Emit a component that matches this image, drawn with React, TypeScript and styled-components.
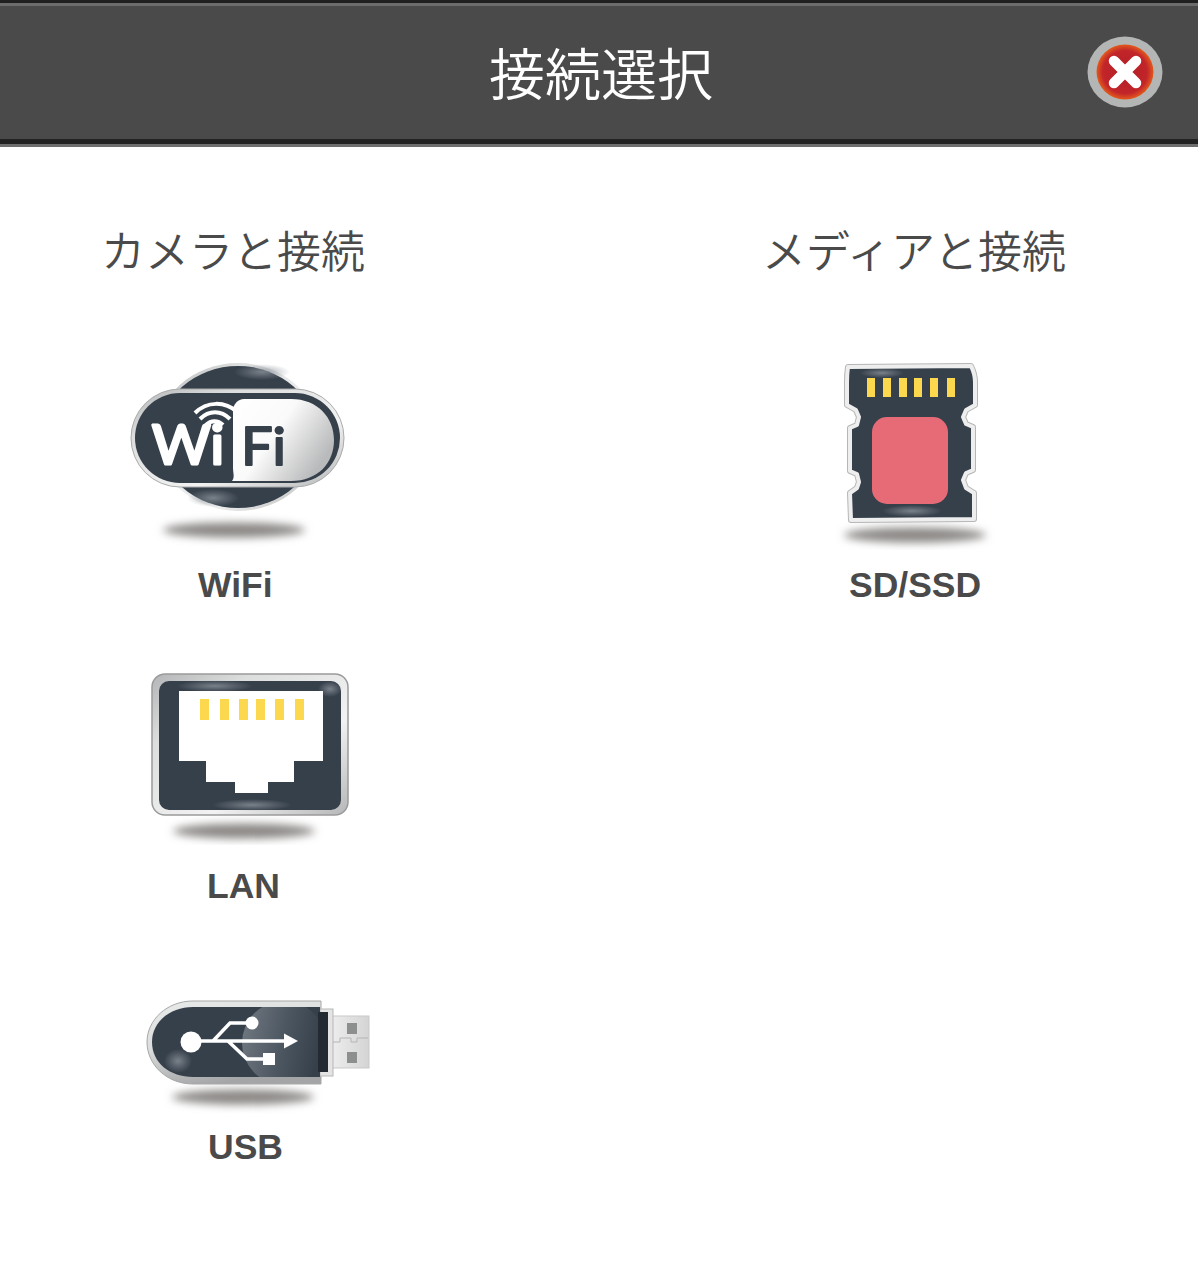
import React from 'react';
import styled, { createGlobalStyle } from 'styled-components';

const GlobalStyle = createGlobalStyle`
    html, body {
        margin: 0;
        padding: 0;
        background: #fff;
    }
`;

const Page = styled.div`
    width: 1200px;
    height: 1262px;
    overflow: hidden;
    font-family: 'Noto Sans CJK JP', 'Liberation Sans', sans-serif;
`;

const Header = styled.header`
    box-sizing: border-box;
    width: 1198px;
    height: 147px;
    display: grid;
    grid-template-columns: 1fr auto 1fr;
    align-items: center;
    background: #4a4a4a;
    border-top: 3px solid #1f1f1f;
    border-bottom: 3px solid #6e6e6e;
    box-shadow: inset 0 3px 0 #6c6c6c, inset 0 -5px 0 #222;
`;

const Title = styled.h1`
    grid-column: 2;
    margin: 0;
    color: #fff;
    font-size: 56px;
    font-weight: 350;
    line-height: 1;
    transform: translate(2px, -3px);
`;

const CloseButton = styled.button`
    grid-column: 3;
    justify-self: end;
    width: 76px;
    height: 72px;
    margin: -4px 35px 0 0;
    padding: 0;
    border: 0;
    background: none;
`;

const Columns = styled.main`
    display: grid;
    grid-template-columns: 598px 1fr;
`;

const Column = styled.section`
    display: flex;
    flex-direction: column;
`;

const Heading = styled.h2<{ $indent: number }>`
    margin: 77px 0 0 ${p => p.$indent}px;
    height: 50px;
    color: #4a4a4a;
    font-size: 44px;
    font-weight: 350;
    line-height: 50px;
    white-space: nowrap;
`;

const Item = styled.div<{ $top: number; $left: number }>`
    display: flex;
    flex-direction: column;
    width: 400px;
    margin-top: ${p => p.$top}px;
    padding-left: ${p => p.$left}px;
`;

const Label = styled.span<{ $gap: number; $left: number }>`
    margin: ${p => p.$gap}px 0 0 ${p => p.$left}px;
    color: #4a4a4a;
    font-family: 'Liberation Sans', Arial, sans-serif;
    font-size: 35.5px;
    font-weight: 700;
    line-height: 40px;
`;

const Icon = styled.svg`
    display: block;
`;

const CloseIcon = () => (
    <svg width="76" height="72" viewBox="0 0 76 72">
        <defs>
            <radialGradient id="closeFill" cx="50%" cy="50%" r="50%">
                <stop offset="0" stopColor="#b01f24" />
                <stop offset="0.78" stopColor="#c2252a" />
                <stop offset="1" stopColor="#e2591c" />
            </radialGradient>
        </defs>
        <ellipse cx="38" cy="36" rx="37.5" ry="35.5" fill="#b4b6b5" />
        <ellipse cx="38" cy="36" rx="28.5" ry="27.5" fill="url(#closeFill)" />
        <path d="M27 25 L49 47 M49 25 L27 47" stroke="#fff" strokeWidth="10.5" strokeLinecap="round" />
    </svg>
);

const Shadow = ({ id, cx, cy, rx }: { id: string; cx: number; cy: number; rx: number }) => (
    <>
        <filter id={id} x="-20%" y="-150%" width="140%" height="400%">
            <feGaussianBlur stdDeviation="4" />
        </filter>
        <ellipse cx={cx} cy={cy} rx={rx} ry="7.5" fill="#8a8785" filter={`url(#${id})`} />
    </>
);

const Defs = ({ prefix }: { prefix: string }) => (
    <defs>
        <linearGradient id={`${prefix}Rim`} x1="0" y1="0" x2="1" y2="1">
            <stop offset="0" stopColor="#b3b5b6" />
            <stop offset="0.25" stopColor="#dcdddd" />
            <stop offset="0.65" stopColor="#f2f2f2" />
            <stop offset="1" stopColor="#b5b6b7" />
        </linearGradient>
        <radialGradient id={`${prefix}Glow`}>
            <stop offset="0" stopColor="#8a9199" stopOpacity="0.8" />
            <stop offset="1" stopColor="#8a9199" stopOpacity="0" />
        </radialGradient>
        <linearGradient id={`${prefix}Shine`} x1="0" y1="0" x2="1" y2="0.55">
            <stop offset="0" stopColor="#ffffff" />
            <stop offset="0.5" stopColor="#fafafa" />
            <stop offset="1" stopColor="#b9babb" />
        </linearGradient>
    </defs>
);

const WifiIcon = () => (
    <Icon width="220" height="190" viewBox="130 360 220 190">
        <Defs prefix="wifi" />
        <Shadow id="wifiShadow" cx={234} cy={530} rx={71} />
        <ellipse cx="238" cy="437" rx="82" ry="74" fill="url(#wifiRim)" />
        <ellipse cx="238" cy="437" rx="79" ry="71" fill="#36404b" />
        <ellipse cx="262" cy="372" rx="28" ry="8" fill="url(#wifiGlow)" />
        <ellipse cx="213" cy="498" rx="26" ry="9" fill="url(#wifiGlow)" />
        <rect x="131" y="389" width="213" height="98" rx="49" stroke="#a9abac" strokeWidth="1" fill="url(#wifiRim)" />
        <rect x="135" y="393" width="205" height="90" rx="45" fill="#36404b" />
        <path
            d="M244 399 H291 C318 399 334 418 334 440 C334 463 318 481 291 481 H232 C235 477 233 473 233 468 V411 C233 404 238 399 244 399 Z"
            fill="url(#wifiShine)"
        />
        <path d="M195 413 C207 401 225 401 237 412" fill="none" stroke="#fff" strokeWidth="4" />
        <path d="M200 419 C209 410 221 410 230 419" fill="none" stroke="#fff" strokeWidth="4" />
        <path d="M206 425 C211 420 218 420 223 425" fill="none" stroke="#fff" strokeWidth="4" />
        <text
            x="152"
            y="464"
            fill="#fff"
            stroke="#fff"
            strokeWidth="3"
            strokeLinejoin="round"
            fontFamily="Lato, sans-serif"
            fontWeight="400"
            fontSize="54"
            textLength="72"
            lengthAdjust="spacingAndGlyphs"
        >
            Wi
        </text>
        <text
            x="241"
            y="465"
            fill="#36404b"
            stroke="#36404b"
            strokeWidth="2"
            strokeLinejoin="round"
            fontFamily="Lato, sans-serif"
            fontWeight="400"
            fontSize="52"
            textLength="45"
            lengthAdjust="spacingAndGlyphs"
        >
            Fi
        </text>
    </Icon>
);

const LanIcon = () => (
    <Icon width="220" height="180" viewBox="140 665 220 180">
        <Defs prefix="lan" />
        <Shadow id="lanShadow" cx={244} cy={831} rx={71} />
        <rect x="152" y="674" width="196" height="141" rx="13" fill="url(#lanRim)" stroke="#9a9b9c" strokeWidth="1.5" />
        <rect x="159" y="681" width="182" height="129" rx="10" fill="#36404b" />
        <ellipse cx="215" cy="686" rx="38" ry="6" fill="url(#lanGlow)" />
        <ellipse cx="330" cy="689" rx="12" ry="8" fill="url(#lanGlow)" />
        <ellipse cx="252" cy="805" rx="40" ry="6" fill="url(#lanGlow)" />
        <path d="M179 691 H323 V761 H294 V782 H268 V793 H235 V782 H206 V761 H179 Z" fill="#fff" />
        {[200, 220, 239, 256, 275, 295].map(x => (
            <rect key={x} x={x} y="699" width="9" height="21" fill="#fbd84e" />
        ))}
    </Icon>
);

const UsbIcon = () => (
    <Icon width="240" height="120" viewBox="140 995 240 120">
        <defs>
            <linearGradient id="usbRim" x1="0" y1="0" x2="0.4" y2="1">
                <stop offset="0" stopColor="#e9eaea" />
                <stop offset="0.5" stopColor="#dcdddd" />
                <stop offset="1" stopColor="#a4a5a6" />
            </linearGradient>
            <linearGradient id="usbLens" x1="0" y1="0" x2="1" y2="0.2">
                <stop offset="0" stopColor="#737b84" />
                <stop offset="0.55" stopColor="#4d5761" />
                <stop offset="1" stopColor="#36404b" />
            </linearGradient>
            <linearGradient id="usbPlug" x1="0" y1="0" x2="1" y2="0">
                <stop offset="0" stopColor="#efefef" />
                <stop offset="1" stopColor="#d4d4d4" />
            </linearGradient>
            <radialGradient id="usbGlow">
                <stop offset="0" stopColor="#8a9199" stopOpacity="0.8" />
                <stop offset="1" stopColor="#8a9199" stopOpacity="0" />
            </radialGradient>
            <clipPath id="usbClip">
                <path d="M193 1008 H320 V1078 H193 C170 1078 152 1064 152 1043 C152 1023 170 1008 193 1008 Z" />
            </clipPath>
        </defs>
        <Shadow id="usbShadow" cx={243} cy={1098} rx={71} />
        <rect x="329" y="1017" width="40" height="52" fill="url(#usbPlug)" stroke="#c9c9c9" strokeWidth="1" />
        <path d="M331 1043 H340 V1039 H351 V1043 H357 V1039 H368" fill="none" stroke="#b5b5b5" strokeWidth="1" />
        <rect x="347" y="1024" width="10" height="11" fill="#8c8f8d" />
        <rect x="347" y="1053" width="10" height="11" fill="#8c8f8d" />
        <path
            d="M193 1002 H321 V1085 H193 C167 1085 147 1066 147 1043 C147 1021 167 1002 193 1002 Z"
            fill="url(#usbRim)"
            stroke="#a6a7a8"
            strokeWidth="1"
        />
        <rect x="320" y="1010" width="13" height="67" fill="#e4e4e4" stroke="#b7b7b7" strokeWidth="1" />
        <path d="M193 1008 H320 V1078 H193 C170 1078 152 1064 152 1043 C152 1023 170 1008 193 1008 Z" fill="#36404b" />
        <g clipPath="url(#usbClip)">
            <circle cx="284" cy="1044" r="42" fill="url(#usbLens)" />
            <ellipse cx="178" cy="1062" rx="14" ry="12" fill="url(#usbGlow)" />
        </g>
        <rect x="318" y="1013" width="10" height="60" fill="#232a31" />
        <circle cx="191" cy="1043" r="10.5" fill="#fff" />
        <circle cx="252" cy="1024" r="6.5" fill="#fff" />
        <rect x="263" y="1054" width="12" height="12" fill="#fff" />
        <path
            d="M195 1042 H286 M213 1042 L230 1024 H250 M228 1042 L247 1060 H266"
            fill="none"
            stroke="#fff"
            strokeWidth="3.5"
        />
        <path d="M284 1034.5 L298 1042 L284 1049.5 Z" fill="#fff" />
    </Icon>
);

const SD_OUTLINE =
    'M848 367 L971 366 Q975 374 975 382 L975 405 L966 410 L963 417 L966 424 L973 427 L973 470 L966 473 L963 480 L966 488 L974 493 L974 519 L851 520 L850 493 L857 488 L859 482 L857 474 L850 471 L850 428 L857 425 L859 417 L856 410 L847 405 L847 382 Q847 374 848 367 Z';

const SdIcon = () => (
    <Icon width="170" height="190" viewBox="830 360 170 190">
        <Defs prefix="sd" />
        <Shadow id="sdShadow" cx={915} cy={535} rx={71} />
        <path d={SD_OUTLINE} fill="#36404b" stroke="#b5b6b7" strokeWidth="6" strokeLinejoin="round" />
        <path d={SD_OUTLINE} fill="#36404b" stroke="#eeeeee" strokeWidth="4" strokeLinejoin="round" />
        <ellipse cx="882" cy="373" rx="22" ry="5" fill="url(#sdGlow)" />
        <ellipse cx="912" cy="511" rx="30" ry="6" fill="url(#sdGlow)" />
        {[867, 883, 899, 914, 930, 947].map(x => (
            <rect key={x} x={x} y="378" width="8" height="19" fill="#fbd84e" />
        ))}
        <rect x="872" y="417" width="76" height="87" rx="15" fill="#e76b76" />
    </Icon>
);

const App = () => (
    <Page>
        <GlobalStyle />
        <Header>
            <Title>接続選択</Title>
            <CloseButton aria-label="閉じる">
                <CloseIcon />
            </CloseButton>
        </Header>
        <Columns>
            <Column>
                <Heading $indent={101}>カメラと接続</Heading>
                <Item $top={86} $left={130}>
                    <WifiIcon />
                    <Label $gap={15} $left={68}>WiFi</Label>
                </Item>
                <Item $top={60} $left={140}>
                    <LanIcon />
                    <Label $gap={21} $left={67}>LAN</Label>
                </Item>
                <Item $top={88} $left={140}>
                    <UsbIcon />
                    <Label $gap={13} $left={68}>USB</Label>
                </Item>
            </Column>
            <Column>
                <Heading $indent={164}>メディアと接続</Heading>
                <Item $top={86} $left={232}>
                    <SdIcon />
                    <Label $gap={15} $left={19}>SD/SSD</Label>
                </Item>
            </Column>
        </Columns>
    </Page>
);

export default App;
